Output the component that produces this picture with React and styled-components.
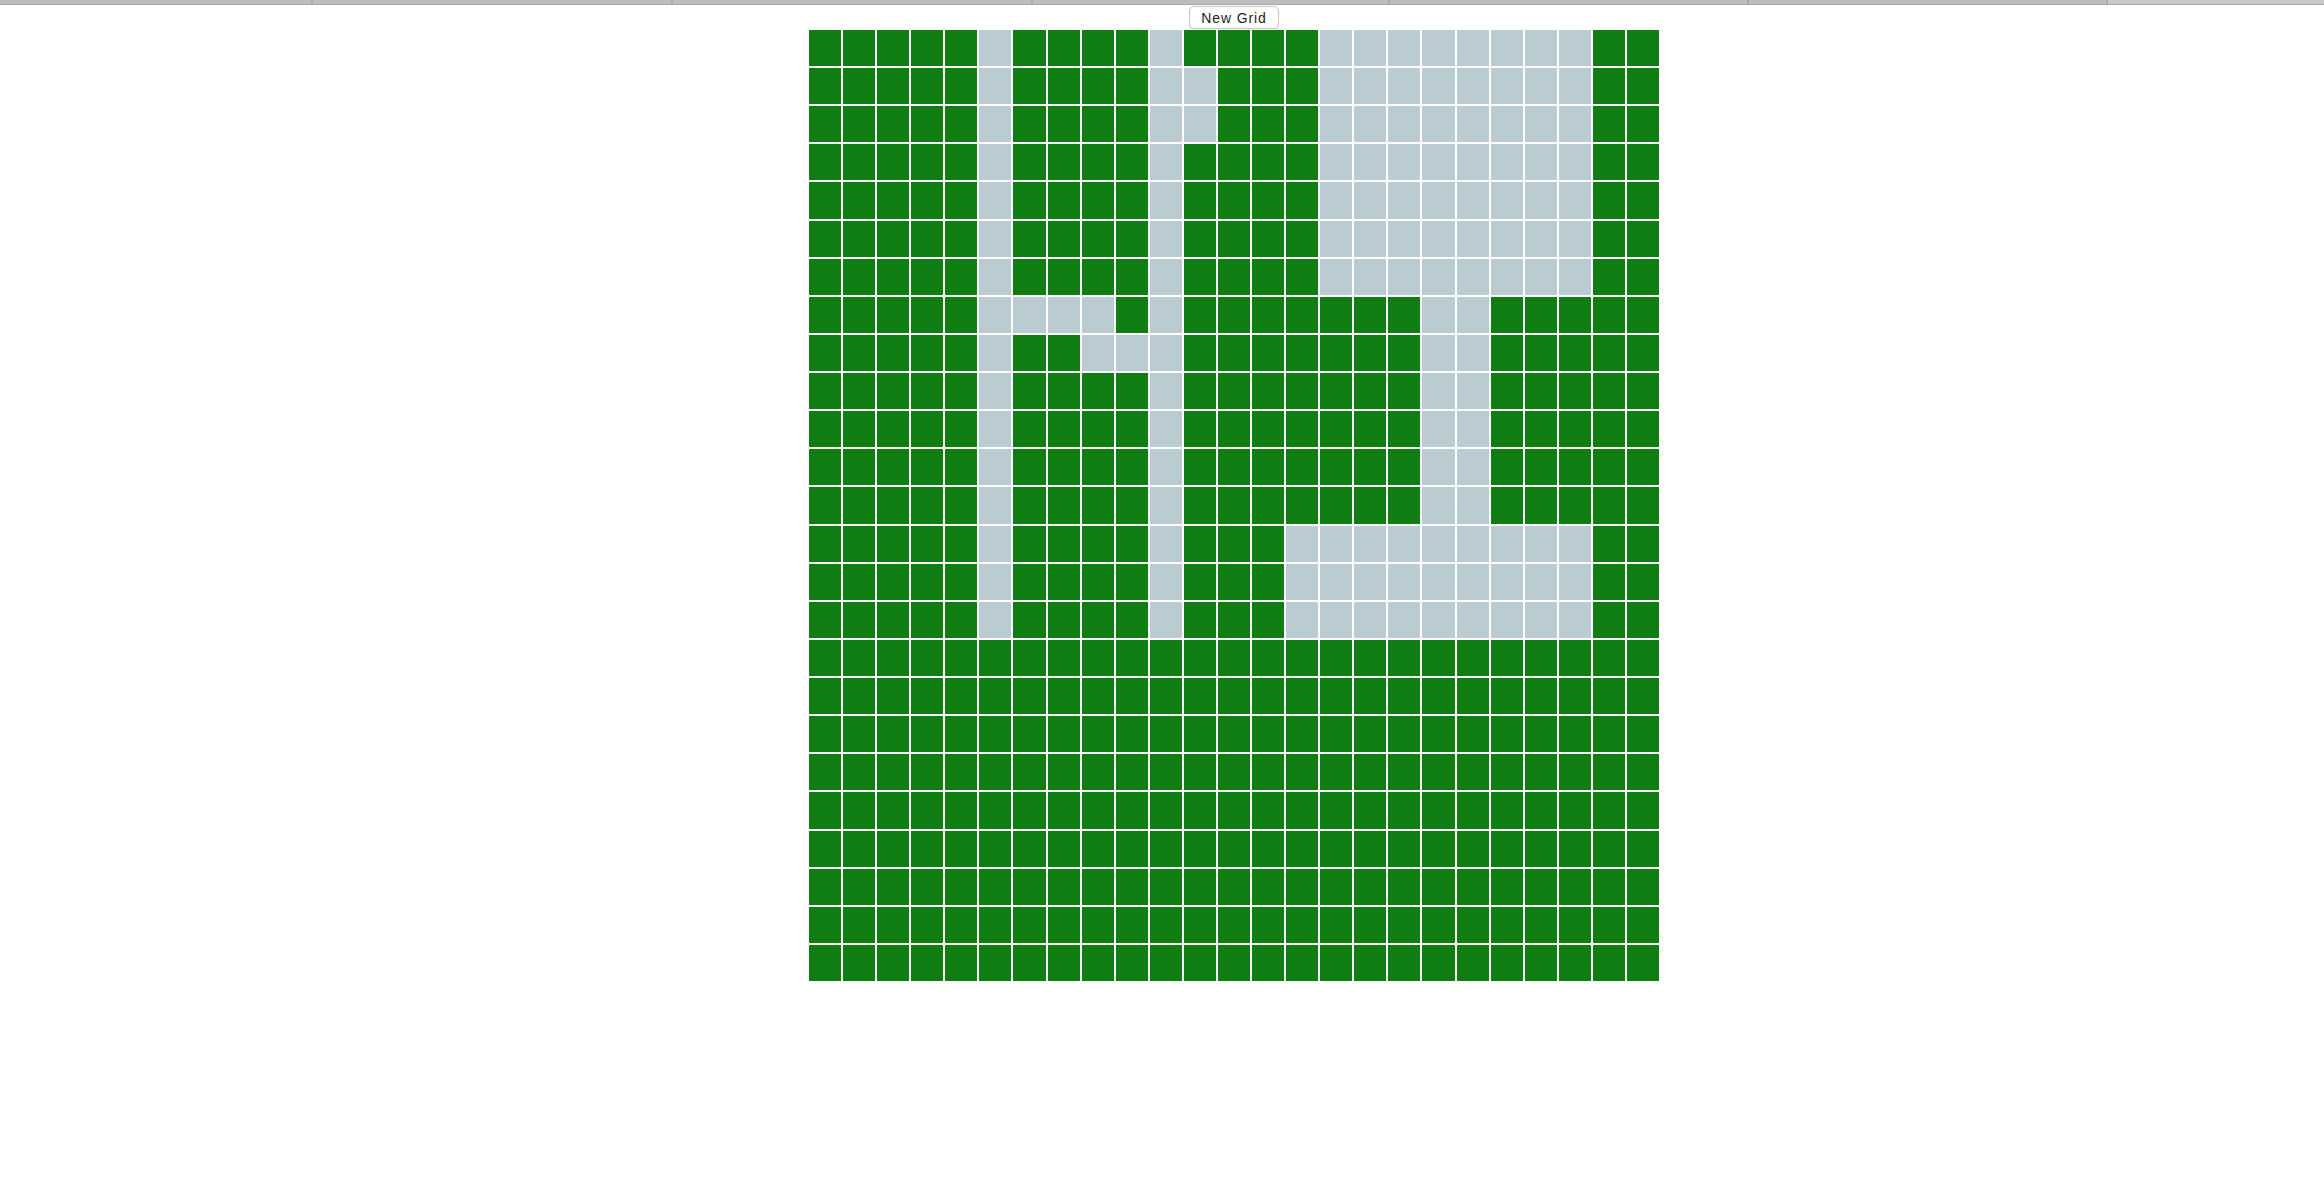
import styled, { createGlobalStyle } from "styled-components";

const GlobalStyle = createGlobalStyle`
  html, body {
    margin: 0;
    padding: 0;
    background: #ffffff;
  }
  body {
    font-family: "Liberation Sans", Arial, sans-serif;
  }
`;

const TabStrip = styled.div`
  display: flex;
  height: 4px;
  border-bottom: 1px solid #a7a7a7;
  background: #c9c9c9;
`;

const Tab = styled.div`
  flex: 0 0 ${(props) => props.width}px;
  background: ${(props) => (props.light ? "#c9c9c9" : "#bdbdbd")};
  border-right: ${(props) => (props.light ? "none" : "2px solid #a9a9a9")};
  box-sizing: border-box;
`;

const Page = styled.div`
  display: flex;
  flex-direction: column;
  align-items: center;
  padding-left: 144px;
`;

const Button = styled.button`
  height: 23px;
  padding: 0 11px;
  margin-top: 1px;
  border: 1px solid #c6c6c6;
  border-radius: 5px;
  background: #ffffff;
  box-shadow: 0 1px 1px rgba(0, 0, 0, 0.12);
  font-family: "Liberation Sans", Arial, sans-serif;
  font-size: 14px;
  letter-spacing: 0.9px;
  color: #1e1e1e;
  cursor: pointer;
`;

const Grid = styled.div`
  display: grid;
  grid-template-columns: repeat(25, 1fr);
  grid-template-rows: repeat(25, 1fr);
  width: 852px;
  height: 953px;
`;

const Cell = styled.div`
  border: 1px solid #ffffff;
  background: ${(props) => (props.open ? "#bbcbd2" : "#107d12")};
`;

const tabs = [313, 360, 360, 357, 359, 359];

const range = (a, b) => Array.from({ length: b - a + 1 }, (_, i) => a + i);

const openCells = [
  [5, 10, ...range(15, 22)],
  [5, 10, 11, ...range(15, 22)],
  [5, 10, 11, ...range(15, 22)],
  [5, 10, ...range(15, 22)],
  [5, 10, ...range(15, 22)],
  [5, 10, ...range(15, 22)],
  [5, 10, ...range(15, 22)],
  [5, 6, 7, 8, 10, 18, 19],
  [5, 8, 9, 10, 18, 19],
  [5, 10, 18, 19],
  [5, 10, 18, 19],
  [5, 10, 18, 19],
  [5, 10, 18, 19],
  [5, 10, ...range(14, 22)],
  [5, 10, ...range(14, 22)],
  [5, 10, ...range(14, 22)],
];

const SIZE = 25;

export default function App() {
  const rows = Array.from({ length: SIZE }, (_, r) =>
    Array.from({ length: SIZE }, (_, c) => (openCells[r] || []).includes(c))
  );

  return (
    <>
      <GlobalStyle />
      <TabStrip>
        {tabs.map((w, i) => (
          <Tab key={i} width={w} />
        ))}
        <Tab light width={216} />
      </TabStrip>
      <Page>
        <Button>New Grid</Button>
        <Grid>
          {rows.map((row, r) =>
            row.map((open, c) => <Cell key={`${r}-${c}`} open={open} />)
          )}
        </Grid>
      </Page>
    </>
  );
}
